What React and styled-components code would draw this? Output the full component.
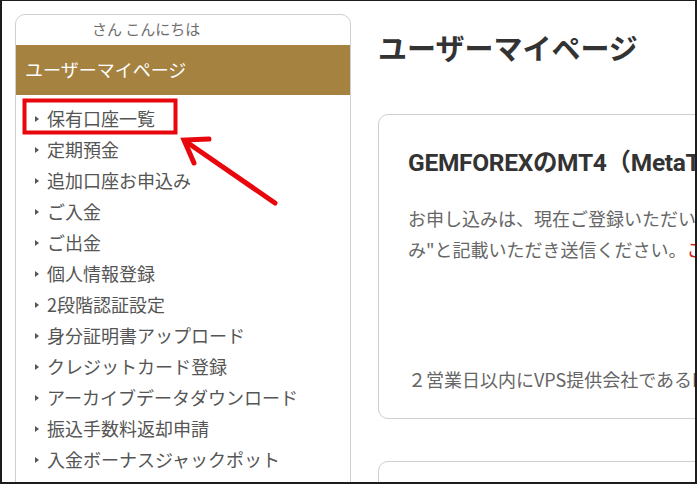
import styled, { createGlobalStyle } from "styled-components";

const menuItems = [
  "保有口座一覧",
  "定期預金",
  "追加口座お申込み",
  "ご入金",
  "ご出金",
  "個人情報登録",
  "2段階認証設定",
  "身分証明書アップロード",
  "クレジットカード登録",
  "アーカイブデータダウンロード",
  "振込手数料返却申請",
  "入金ボーナスジャックポット",
];

const GlobalStyle = createGlobalStyle`
  html, body {
    margin: 0;
    padding: 0;
    background: #fff;
  }
  body {
    font-family: Roboto, "Noto Sans CJK JP", sans-serif;
  }
`;

const App = () => {
  return (
    <>
      <GlobalStyle />
      <Frame>
        <Sidebar>
          <Greeting>さん こんにちは</Greeting>
          <SideHeader>ユーザーマイページ</SideHeader>
          <Menu>
            {menuItems.map((item) => (
              <MenuItem key={item}>{item}</MenuItem>
            ))}
          </Menu>
        </Sidebar>
        <Main>
          <PageTitle>ユーザーマイページ</PageTitle>
          <Card>
            <CardTitle>GEMFOREXのMT4（MetaTrader4）VPS</CardTitle>
            <Text>
              お申し込みは、現在ご登録いただいているメールアドレスより件名に"VPSお申込
              <br />
              み"と記載いただき送信ください。<Red>こちら</Red>
            </Text>
            <Note>２営業日以内にVPS提供会社であるMyVPSより</Note>
          </Card>
          <Card />
        </Main>
        <Annotation width="300" height="230" viewBox="0 0 300 230">
          <rect x="24.5" y="100.5" width="151" height="32" fill="none" stroke="#e8070c" strokeWidth="4" />
          <line x1="275" y1="203" x2="188" y2="143" stroke="#e8070c" strokeWidth="5" strokeLinecap="round" />
          <polyline
            points="194,163 184,140 209,139"
            fill="none"
            stroke="#e8070c"
            strokeWidth="5"
            strokeLinecap="round"
            strokeLinejoin="miter"
          />
        </Annotation>
      </Frame>
    </>
  );
};

export default App;

const Frame = styled.div`
  position: relative;
  box-sizing: border-box;
  width: 697px;
  height: 484px;
  border: 2px solid #1c1c1c;
  border-top-width: 1px;
  overflow: hidden;
  display: flex;
  gap: 27px;
  padding: 13px 0 0 13px;
`;
const Sidebar = styled.div`
  flex-shrink: 0;
  box-sizing: border-box;
  width: 336px;
  height: 520px;
  border: 1px solid #cfcfcf;
  border-radius: 10px 10px 0 0;
  font-family: "Noto Sans CJK JP", sans-serif;
`;
const Greeting = styled.div`
  height: 30px;
  line-height: 28px;
  padding-left: 76px;
  font-size: 15px;
  color: #6e6e6e;
`;
const SideHeader = styled.div`
  height: 50px;
  line-height: 48px;
  padding-left: 9px;
  background: #a5823f;
  color: #fff;
  font-size: 18px;
`;
const Menu = styled.ul`
  list-style: none;
  margin: 0;
  padding: 8px 0 0 0;
`;
const MenuItem = styled.li`
  position: relative;
  height: 31px;
  line-height: 31px;
  padding-left: 31px;
  font-size: 18px;
  color: #555;
  &::before {
    content: "";
    position: absolute;
    left: 19px;
    top: 13px;
    border-style: solid;
    border-width: 3px 0 3px 4px;
    border-color: transparent transparent transparent #555;
  }
`;
const Main = styled.div`
  flex-shrink: 0;
  width: 440px;
`;
const PageTitle = styled.h1`
  margin: 13px 0 0 0;
  height: 40px;
  line-height: 40px;
  font-family: "Noto Sans CJK JP", sans-serif;
  font-size: 29px;
  font-weight: 700;
  color: #333;
`;
const Card = styled.div`
  box-sizing: border-box;
  margin-top: 47px;
  min-height: 100px;
  border: 1px solid #cfcfcf;
  border-radius: 10px;
  padding: 33px 0 23px 29px;
  white-space: nowrap;
  & + & {
    margin-top: 42px;
  }
`;
const CardTitle = styled.h2`
  margin: 0;
  line-height: 30px;
  font-size: 24.5px;
  font-weight: 700;
  letter-spacing: -0.3px;
  color: #333;
`;
const Text = styled.p`
  margin: 25px 0 0 0;
  line-height: 31px;
  font-size: 18px;
  color: #666;
  font-family: "Noto Sans CJK JP", sans-serif;
`;
const Red = styled.span`
  color: #d02020;
`;
const Note = styled.p`
  margin: 99px 0 0 0;
  line-height: 31px;
  font-size: 18px;
  color: #666;
  font-family: "Noto Sans CJK JP", sans-serif;
`;
const Annotation = styled.svg`
  position: absolute;
  left: -2px;
  top: -1px;
  pointer-events: none;
`;
